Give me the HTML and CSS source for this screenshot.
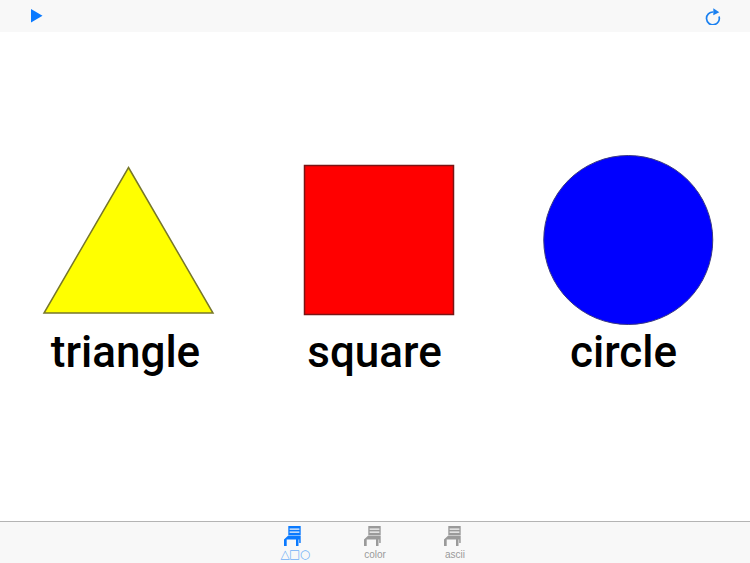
FILE: index.html
```html
<!DOCTYPE html>
<html lang="en">
<head>
    <meta charset="UTF-8">
    <meta name="viewport" content="width=device-width, initial-scale=1.0">
    <title>Shapes</title>
    <link rel="stylesheet" href="styles.css">
</head>
<body>
    <svg class="defs" width="0" height="0">
        <symbol id="chair" viewBox="0 0 18 20">
            <path d="M4.3 0h12.4v9H4.3z M5.6 2.6h9.8v1.1H5.6z M5.6 5.6h9.8v1.1H5.6z" fill-rule="evenodd"/>
            <path d="M4.3 9.4h12.4V17h-1.5v-3.6h-.7V20H12v-6.4H2.7V20H0v-6.5z"/>
        </symbol>
    </svg>

    <header class="toolbar">
        <svg class="play" width="12" height="14" viewBox="0 0 12 14"><path d="M0 0L11.5 6.8L0 13.6z"/></svg>
        <svg class="reload" width="16" height="18" viewBox="0 0 16 18">
            <path class="reload-arc" d="M8.3 5A6.4 6.4 0 1 0 14 9.4"/>
            <path class="reload-head" d="M8.3 1.2L14.3 5.2L8.3 8.2z"/>
        </svg>
    </header>

    <main class="shapes">
        <figure class="shape">
            <svg class="shape-pic" width="249" height="170" viewBox="0 0 249 170">
                <path class="triangle" d="M127.5 12.5L212 158H43z"/>
            </svg>
            <figcaption>triangle</figcaption>
        </figure>
        <figure class="shape">
            <svg class="shape-pic" width="249" height="170" viewBox="0 0 249 170">
                <rect class="square" x="54.5" y="10.5" width="149" height="149"/>
            </svg>
            <figcaption>square</figcaption>
        </figure>
        <figure class="shape">
            <svg class="shape-pic" width="249" height="170" viewBox="0 0 249 170">
                <circle class="circle" cx="129.25" cy="85" r="84.5"/>
            </svg>
            <figcaption>circle</figcaption>
        </figure>
    </main>

    <nav class="tabbar">
        <div class="tab active">
            <svg class="tab-icon" width="18" height="20"><use href="#chair"/></svg>
            <span class="tab-label tab-glyphs">△□○</span>
        </div>
        <div class="tab">
            <svg class="tab-icon" width="18" height="20"><use href="#chair"/></svg>
            <span class="tab-label">color</span>
        </div>
        <div class="tab">
            <svg class="tab-icon" width="18" height="20"><use href="#chair"/></svg>
            <span class="tab-label">ascii</span>
        </div>
    </nav>
</body>
</html>
```

FILE: styles.css
```css
html, body {
    margin: 0;
    height: 100%;
}
body {
    width: 750px;
    height: 563px;
    display: flex;
    flex-direction: column;
    background: #fff;
    font-family: 'Liberation Sans', Arial, sans-serif;
    overflow: hidden;
}
.defs {
    display: none;
}
.toolbar {
    height: 32px;
    flex: none;
    display: flex;
    align-items: center;
    justify-content: space-between;
    padding: 0 29px 0 31px;
    background: #f8f8f8;
}
.play {
    fill: #0a7aff;
}
.reload-arc {
    fill: none;
    stroke: #1a80f0;
    stroke-width: 1.7;
}
.reload-head {
    fill: #1a80f0;
}
.shapes {
    flex: 1;
    display: grid;
    grid-template-columns: repeat(3, 249px);
    align-content: start;
    padding: 123px 0 0 1px;
}
.shape {
    margin: 0;
    text-align: center;
}
.shape-pic {
    display: block;
}
.shape figcaption {
    margin-top: 1px;
    font-family: Roboto, 'Liberation Sans', sans-serif;
    font-size: 44px;
    line-height: 52px;
    font-weight: 500;
    color: #000;
}
.triangle {
    fill: #ff0;
    stroke: #77772a;
    stroke-width: 1.5;
}
.square {
    fill: #f00;
    stroke: #7a1414;
    stroke-width: 1.5;
}
.circle {
    fill: #00f;
    stroke: #3a3a80;
    stroke-width: 1;
}
.tabbar {
    height: 41px;
    flex: none;
    display: flex;
    justify-content: center;
    background: #f8f8f8;
    border-top: 1px solid #b4b4b4;
}
.tab {
    width: 80px;
    display: flex;
    flex-direction: column;
    align-items: center;
    padding-top: 4px;
    color: #9a9a9a;
}
.tab.active {
    color: #0a7aff;
}
.tab-icon {
    display: block;
    fill: currentColor;
    margin-right: 4px;
}
.tab-label {
    margin-top: 3px;
    font-size: 10px;
    line-height: 12px;
}
.tab-glyphs {
    font-family: 'DejaVu Sans', sans-serif;
    font-size: 12px;
    letter-spacing: -0.6px;
    margin-top: 2px;
    color: #71b0f6;
}
```
